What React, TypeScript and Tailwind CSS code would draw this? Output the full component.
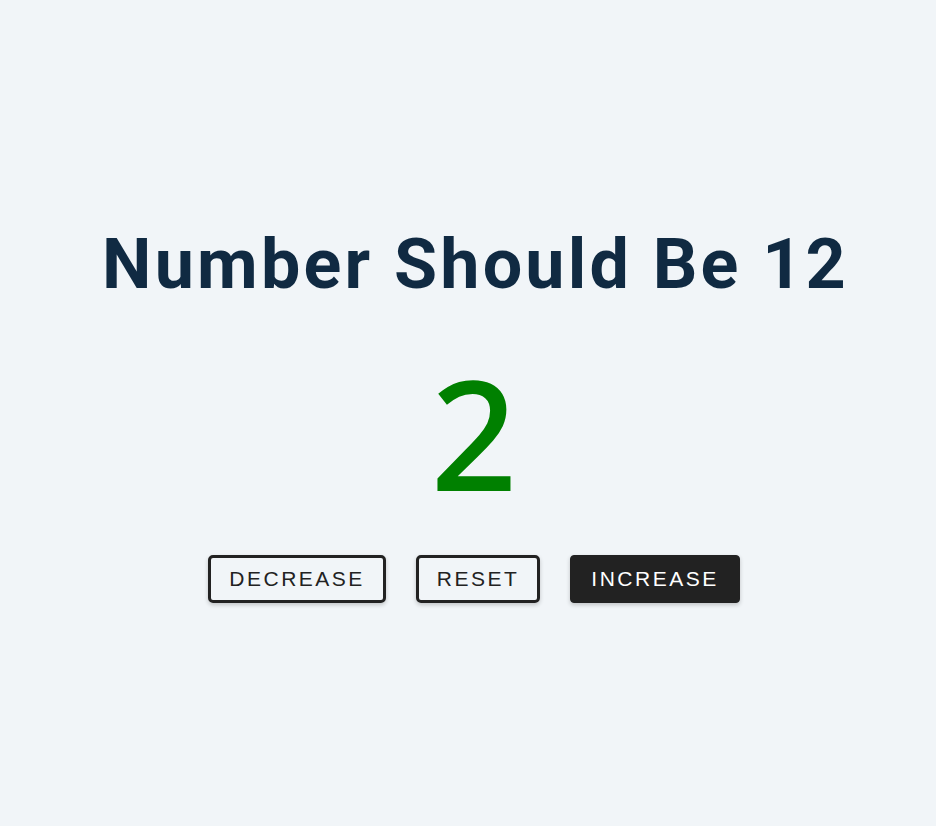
import { useState } from "react";

export default function App() {
  const [count, setCount] = useState(2);

  return (
    <main className="min-h-screen bg-[#f1f5f8] flex flex-col items-center pt-[216px] pl-[12px]">
      <h1 className="ml-[3px] font-['Roboto',sans-serif] font-bold text-[70px] leading-[96px] tracking-[3.2px] text-[#102a42]">
        Number Should Be 12
      </h1>
      <div className="mt-[41px] font-['Noto_Sans',sans-serif] font-medium text-[152px] leading-[160px] text-[#008000]">
        {count}
      </div>
      <div className="mt-[42px] flex items-center gap-[30px] font-['Liberation_Sans',Arial,sans-serif]">
        <button
          type="button"
          onClick={() => setCount(count - 1)}
          className="h-[48px] px-[18px] rounded-[5px] border-[3px] border-[#222] text-[21px] tracking-[2.5px] text-[#222] shadow-[0_2px_4px_rgba(0,0,0,0.2)]"
        >
          DECREASE
        </button>
        <button
          type="button"
          onClick={() => setCount(0)}
          className="h-[48px] px-[18px] rounded-[5px] border-[3px] border-[#222] text-[21px] tracking-[2.5px] text-[#222] shadow-[0_2px_4px_rgba(0,0,0,0.2)]"
        >
          RESET
        </button>
        <button
          type="button"
          onClick={() => setCount(count + 1)}
          className="h-[48px] px-[20px] rounded-[4px] border-[1px] border-[#222] bg-[#222] text-[21px] tracking-[2.5px] text-white shadow-[0_2px_4px_rgba(0,0,0,0.2)]"
        >
          INCREASE
        </button>
      </div>
    </main>
  );
}
